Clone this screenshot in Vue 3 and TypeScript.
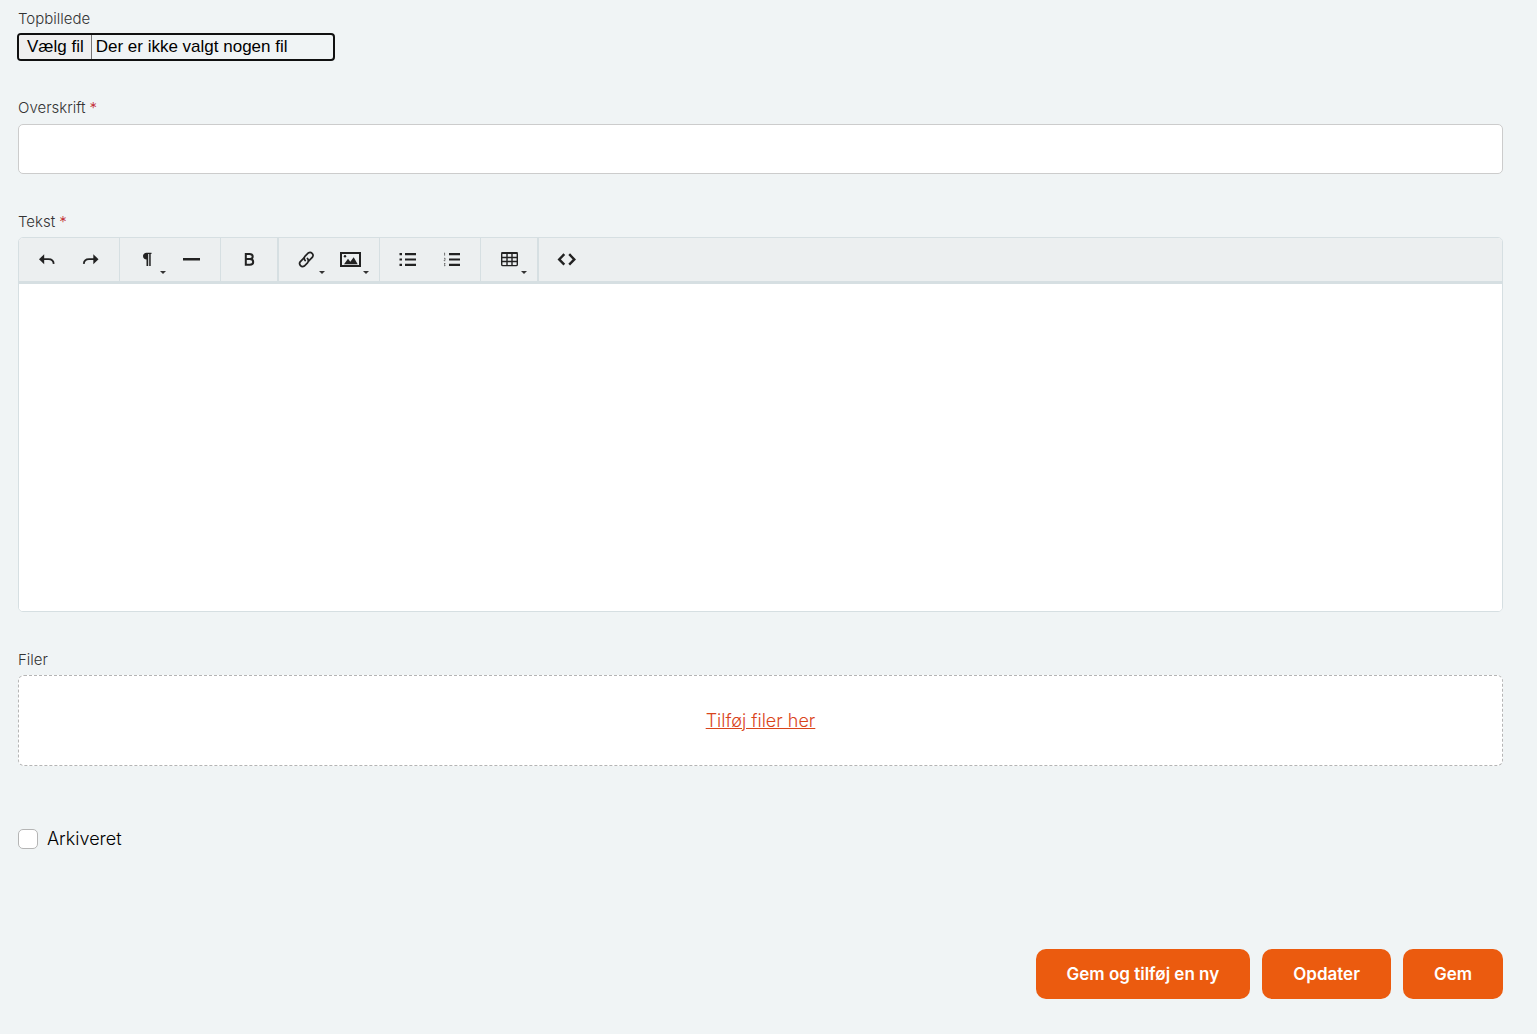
<script setup lang="ts">
import { ref } from 'vue'

type IconName =
  | 'undo' | 'redo' | 'paragraph' | 'rule' | 'bold' | 'link'
  | 'image' | 'bullets' | 'numbers' | 'table' | 'code'

interface Tool {
  icon: IconName
  label: string
  menu?: boolean
}

interface ToolGroup {
  strong?: boolean
  tools: Tool[]
}

const groups: ToolGroup[] = [
  { tools: [{ icon: 'undo', label: 'Fortryd' }, { icon: 'redo', label: 'Gentag' }] },
  { tools: [{ icon: 'paragraph', label: 'Format', menu: true }, { icon: 'rule', label: 'Linje' }] },
  { strong: true, tools: [{ icon: 'bold', label: 'Fed' }] },
  { tools: [{ icon: 'link', label: 'Link', menu: true }, { icon: 'image', label: 'Billede', menu: true }] },
  { tools: [{ icon: 'bullets', label: 'Punktliste' }, { icon: 'numbers', label: 'Nummerliste' }] },
  { strong: true, tools: [{ icon: 'table', label: 'Tabel', menu: true }] },
  { tools: [{ icon: 'code', label: 'Kode' }] },
]

const actions: string[] = ['Gem og tilføj en ny', 'Opdater', 'Gem']

const headline = ref('')
const body = ref('')
const archived = ref(false)
</script>

<template>
  <form class="form" @submit.prevent>
    <div class="field">
      <label class="label" for="top-image">Topbillede</label>
      <div class="file">
        <span class="file-button">Vælg fil</span>
        <span class="file-name">Der er ikke valgt nogen fil</span>
        <input id="top-image" class="file-input" type="file" />
      </div>
    </div>

    <div class="field">
      <label class="label spaced" for="headline">Overskrift<span class="required">*</span></label>
      <input id="headline" v-model="headline" class="text-input" type="text" />
    </div>

    <div class="field">
      <label class="label" for="body">Tekst<span class="required">*</span></label>
      <div class="editor">
        <div class="toolbar" role="toolbar">
          <div
            v-for="(group, index) in groups"
            :key="index"
            class="group"
            :class="{ strong: group.strong }"
          >
            <button
              v-for="tool in group.tools"
              :key="tool.icon"
              class="tool"
              type="button"
              :aria-label="tool.label"
            >
              <svg class="icon" width="24" height="24" viewBox="0 0 24 24" aria-hidden="true">
                <g v-if="tool.icon === 'undo'">
                  <path d="M4 12.200l5.200-5v10z" fill="#222" />
                  <path d="M8 12.200h5.500c3 0 5 1.500 5.200 4.700" fill="none" stroke="#222" stroke-width="1.800" />
                </g>
                <g v-else-if="tool.icon === 'redo'">
                  <path d="M19.500 12.200l-5.200-5v10z" fill="#222" />
                  <path d="M15.500 12.200h-5.500c-3 0-5 1.500-5.200 4.700" fill="none" stroke="#222" stroke-width="1.800" />
                </g>
                <path
                  v-else-if="tool.icon === 'paragraph'"
                  d="M15.500 5.700v1.400h-.8V19h-1.500V7.100h-1V19h-1.700v-6.500C8.500 12.500 7 11.200 7 9.100S8.500 5.700 10.500 5.700z"
                  fill="#222"
                />
                <path v-else-if="tool.icon === 'rule'" d="M3 11h17v2.500H3z" fill="#222" />
                <path
                  v-else-if="tool.icon === 'bold'"
                  d="M8.800 7h3.700c2.200 0 3.200.9 3.200 2.600s-1 2.500-3 2.500H8.800zM8.800 12.100h4c2.200 0 3.400 1 3.400 2.900s-1.200 2.800-3.400 2.800h-4z"
                  fill="none"
                  stroke="#222"
                  stroke-width="2"
                />
                <g
                  v-else-if="tool.icon === 'link'"
                  transform="translate(-.7 .5) rotate(-45 12 12)"
                  fill="none"
                  stroke="#222"
                  stroke-width="1.700"
                  stroke-linecap="round"
                >
                  <path d="M12.500 14.700H18a3 3 0 0 0 0-5.900H13.500a3 3 0 0 0-3 3.200" />
                  <path d="M11.500 9.300H6a3 3 0 0 0 0 5.900h4.500a3 3 0 0 0 3-3.200" />
                </g>
                <g v-else-if="tool.icon === 'image'">
                  <path d="M2 6h19v13H2z" fill="none" stroke="#222" stroke-width="2" />
                  <path d="M5 17.300l4-5.500 2.300 3 3.400-4.500 4 7z" fill="#222" />
                  <circle cx="6" cy="9.300" r="1.200" fill="#222" />
                </g>
                <g v-else-if="tool.icon === 'bullets'" fill="#222">
                  <path d="M9 6h11v2.200H9zM9 11.400h11v2.200H9zM9 16.800h11V19H9z" />
                  <path d="M3.500 6H6v2.200H3.500zM3.500 11.400H6v2.200H3.500zM3.500 16.800H6V19H3.500z" />
                </g>
                <g v-else-if="tool.icon === 'numbers'">
                  <path d="M9 6h11v2.200H9zM9 11.400h11v2.200H9zM9 16.800h11V19H9z" fill="#222" />
                  <path
                    d="M4 6h.6v2.600M4 11.300h1.100v1L4 13.700h1.300M4 16.500h1.100l-.5 1.200.5 1H4"
                    fill="none"
                    stroke="#555"
                    stroke-width="0.800"
                  />
                </g>
                <g v-else-if="tool.icon === 'table'" fill="none" stroke="#222">
                  <rect x="4.700" y="5.700" width="15.600" height="12.900" rx="1.200" stroke-width="1.400" />
                  <path d="M4.500 6h16" stroke-width="1.800" />
                  <path d="M4.500 10.500h16M4.500 14.500h16M10 5.500v13M15 5.500v13" stroke-width="1.400" />
                </g>
                <path
                  v-else
                  d="M9.300 7.200L4.200 12.400l5.100 5.200M14.200 7.200l5.100 5.200-5.100 5.200"
                  fill="none"
                  stroke="#222"
                  stroke-width="2.400"
                />
              </svg>
              <span v-if="tool.menu" class="caret"></span>
            </button>
          </div>
        </div>
        <textarea id="body" v-model="body" class="body"></textarea>
      </div>
    </div>

    <div class="field">
      <span class="label">Filer</span>
      <div class="dropzone"><a class="add-files" href="#">Tilføj filer her</a></div>
    </div>

    <div class="check-row">
      <input id="archived" v-model="archived" class="checkbox" type="checkbox" />
      <label for="archived">Arkiveret</label>
    </div>

    <div class="actions">
      <button v-for="action in actions" :key="action" class="action" type="submit">{{ action }}</button>
    </div>
  </form>
</template>

<style>
body {
  background: #f0f4f5;
}
</style>

<style scoped>
.form {
  box-sizing: border-box;
  padding: 9px 34px 34px 18px;
  font-family: Inter, "Liberation Sans", sans-serif;
  font-weight: 300;
  color: #000;
}

.field {
  margin-bottom: 38px;
}

.field:first-child {
  margin-bottom: 37px;
}

.label {
  display: block;
  margin-bottom: 5px;
  font-size: 15px;
  line-height: 20px;
  color: #333;
}

.field:first-child .label {
  margin-bottom: 4px;
}

.label.spaced {
  margin-bottom: 6px;
}

.required {
  margin-left: 4px;
  color: #c1272d;
}

.file {
  position: relative;
  display: flex;
  box-sizing: border-box;
  width: 318px;
  height: 28px;
  margin-left: -1px;
  overflow: hidden;
  border: 2px solid #101010;
  border-radius: 4px;
  font-family: "Liberation Sans", Arial, sans-serif;
  font-size: 17px;
  font-weight: 400;
  line-height: 23px;
  color: #000;
  white-space: nowrap;
}

.file-button {
  padding: 0 7px 0 8px;
  border-right: 1px solid #767676;
  background: #efefef;
}

.file-name {
  padding-left: 4px;
}

.file-input {
  position: absolute;
  inset: 0;
  width: 100%;
  opacity: 0;
}

.text-input {
  display: block;
  box-sizing: border-box;
  width: 100%;
  height: 50px;
  padding: 0 16px;
  border: 1px solid #ccc;
  border-radius: 5px;
  background: #fff;
  font: inherit;
  font-size: 18px;
}

.editor {
  overflow: hidden;
  border: 1px solid #d6dfe2;
  border-radius: 5px;
  background: #fff;
}

.toolbar {
  display: flex;
  height: 43px;
  border-bottom: 3px solid #d6dfe2;
  background: #eceff0;
}

.group {
  display: flex;
  padding: 0 6px;
  border-right: 1px solid #d6dfe2;
}

.group.strong {
  border-right-width: 2px;
}

.group:last-child {
  border-right: 0;
}

.tool {
  position: relative;
  display: flex;
  align-items: center;
  justify-content: center;
  width: 44px;
  padding: 0 0 1px;
  border: 0;
  background: none;
}

.icon {
  display: block;
}

.caret {
  position: absolute;
  right: 4px;
  bottom: 7px;
  border: 3px solid transparent;
  border-top-color: #333;
  border-bottom: 0;
}

.body {
  display: block;
  box-sizing: border-box;
  width: 100%;
  height: 327px;
  padding: 16px;
  border: 0;
  background: #fff;
  font: inherit;
  resize: none;
}

.dropzone {
  display: flex;
  align-items: center;
  justify-content: center;
  box-sizing: border-box;
  height: 91px;
  border: 1px dashed #b5b5b5;
  border-radius: 6px;
  background: #fff;
}

.add-files {
  font-size: 18px;
  line-height: 24px;
  color: #d9441b;
}

.check-row {
  display: flex;
  align-items: center;
  gap: 9px;
  height: 20px;
  margin-top: 63px;
  font-size: 18px;
  line-height: 20px;
}

.checkbox {
  appearance: none;
  box-sizing: border-box;
  width: 20px;
  height: 20px;
  margin: 0;
  border: 1px solid #b5b5b5;
  border-radius: 5px;
  background: #fff;
}

.checkbox:checked {
  background: #eb5b0f;
}

.actions {
  display: flex;
  justify-content: flex-end;
  gap: 12px;
  margin-top: 100px;
}

.action {
  height: 50px;
  padding: 0 31px 1px;
  border: 0;
  border-radius: 10px;
  background: #eb5b0f;
  font-family: inherit;
  font-size: 17px;
  font-weight: 600;
  color: #fff;
}
</style>
